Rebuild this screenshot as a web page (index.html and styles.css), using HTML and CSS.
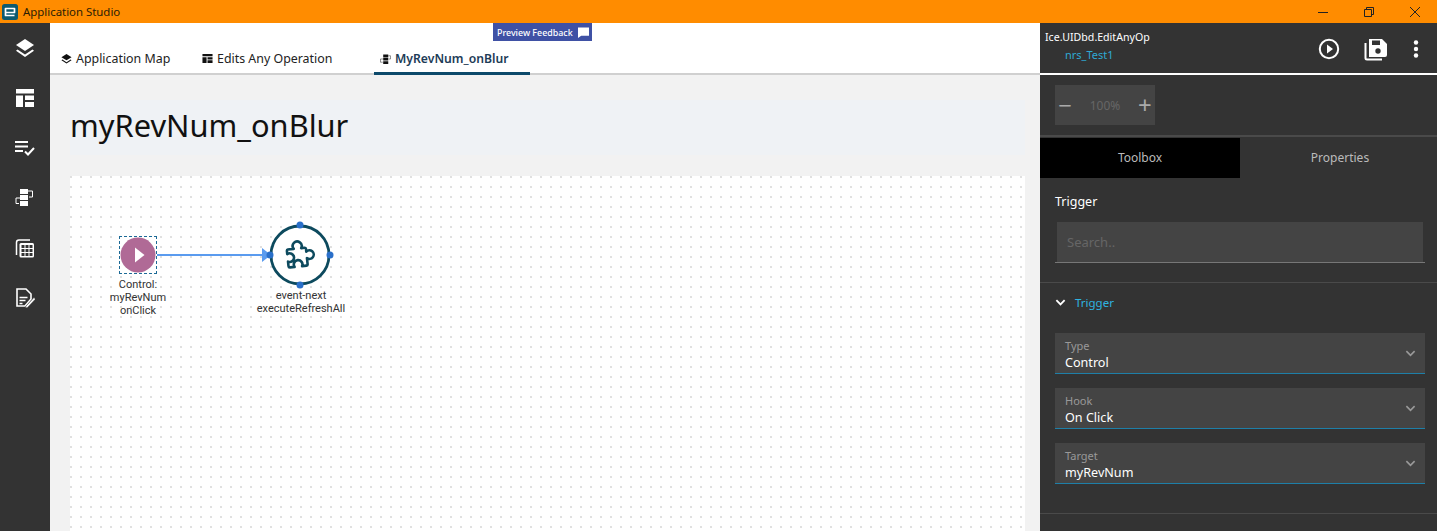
FILE: index.html
```html
<!DOCTYPE html>
<html lang="en">
<head>
<meta charset="utf-8">
<title>Application Studio</title>
<link rel="stylesheet" href="styles.css">
</head>
<body>
<header class="titlebar">
  <div class="logo"><svg viewBox="0 0 16 16" width="16" height="16"><rect width="16" height="16" rx="2.500" fill="#0d5a70"/><path d="M3.500 8.500h9v-4h-9v7h9" fill="none" stroke="#fff" stroke-width="1.700" stroke-linejoin="round"/></svg></div>
  <span class="app-name">Application Studio</span>
  <div class="win-controls">
    <svg viewBox="0 0 12 12" width="12" height="12"><path d="M1 6.500h10" stroke="#222" fill="none"/></svg>
    <svg viewBox="0 0 12 12" width="12" height="12"><path d="M1.500 3.500h7v7h-7zM3.500 3.500v-2h7v7h-2" stroke="#222" fill="none"/></svg>
    <svg viewBox="0 0 12 12" width="12" height="12"><path d="M1 1l10 10M11 1L1 11" stroke="#222" fill="none"/></svg>
  </div>
</header>
<div class="app">
  <nav class="sidebar">
    <svg class="side-icon" viewBox="0 0 20 20"><path d="M10 1l9 6-9 6-9-6z" fill="#fff"/><path d="M2.500 11.500L10 16.500l7.500-5 1.500 1.200-9 6.300-9-6.300z" fill="#fff"/></svg>
    <svg class="side-icon" viewBox="0 0 20 20"><path d="M1 1h18v4.500H1zM1 7.500h7V19H1zM10 7.500h9V12h-9zM10 14h9v5h-9z" fill="#fff"/></svg>
    <svg class="side-icon" viewBox="0 0 20 20"><path d="M0 3h13v2H0zM0 7.500h13v2H0zM0 12h8v2H0z" fill="#fff"/><path d="M10 13.500l3 3 6-6.500" fill="none" stroke="#fff" stroke-width="2"/></svg>
    <svg class="side-icon" viewBox="0 0 20 20"><path d="M5 1h8v5H5zM5 7h8v5H5zM5 13h8v5H5z" fill="#fff"/><path d="M13 3h4.500v6H14M5 10H1v5.500h3" fill="none" stroke="#fff"/></svg>
    <svg class="side-icon" viewBox="0 0 20 20"><path d="M1.500 17V4.500Q1.500 2 4 2h11" fill="none" stroke="#fff" stroke-width="1.500"/><rect x="4.500" y="5" width="14.500" height="14.500" rx="1.500" fill="#fff"/><path d="M6.500 7h3v3h-3zM10.500 7h3v3h-3zM14.500 7h3v3h-3zM6.500 11h3v3h-3zM10.500 11h3v3h-3zM14.500 11h3v3h-3zM6.500 15h3v3h-3zM10.500 15h3v3h-3zM14.500 15h3v3h-3z" fill="#333"/></svg>
    <svg class="side-icon" viewBox="0 0 20 20"><path d="M2 1h9l5 5v5l-6 7H2z" fill="none" stroke="#fff" stroke-width="1.600"/><path d="M4.500 9.500h8M4.500 12.500h6M4.500 15.500h3" stroke="#fff" stroke-width="1.500"/><path d="M11 18l8-8.500 1.500 1.500-8 8.500-2 .5z" fill="#fff" stroke="#333" stroke-width=".5"/></svg>
  </nav>

  <main class="main">
    <div class="tabs">
      <a class="tab tab-map">
        <svg viewBox="0 0 12 12" width="11" height="11"><path d="M6 1l5.500 3.500L6 8 .5 4.500z" fill="#111"/><path d="M1.500 7L6 10l4.500-3 1 .8L6 11.500.5 7.800z" fill="#111"/></svg>
        Application Map
      </a>
      <a class="tab tab-edits">
        <svg viewBox="0 0 12 12" width="11" height="11"><path d="M.5 1h11v2.500H.5zM.5 4.500H5V11H.5zM6 4.500h5.500V7H6zM6 8h5.500v3H6z" fill="#111"/></svg>
        Edits Any Operation
      </a>
      <a class="tab tab-active">
        <svg viewBox="0 0 12 12" width="11" height="12"><path d="M3.500 1h5.500v3H3.500zM3.500 4.700h5.500v3H3.500zM3.500 8.400h5.500v3H3.500z" fill="#111"/><path d="M9 2.500h2.500v3.500H9.500M3.500 6H.5v3.500h2.500" fill="none" stroke="#555" stroke-width=".7"/></svg>
        MyRevNum_onBlur
      </a>
    </div>
    <div class="feedback">Preview Feedback
      <svg viewBox="0 0 12 12" width="11" height="11"><path d="M0 .5h12v9H3.500L0 12z" fill="#fff"/></svg>
    </div>
    <div class="content">
      <h1 class="page-title">myRevNum_onBlur</h1>
      <section class="canvas">
        <svg class="edges" width="230" height="140" viewBox="0 0 230 140">
          <path d="M87 79h106" stroke="#5a9bef" stroke-width="2" fill="none"/>
          <path d="M192 72l9 7-9 7z" fill="#5a9bef"/>
        </svg>
        <div class="trigger-node">
          <svg viewBox="0 0 36 36" width="36" height="36">
            <circle cx="18" cy="18" r="17.500" fill="#b06a96"/>
            <path d="M15 10.500l9.500 7.500-9.500 7.500z" fill="#fff"/>
          </svg>
        </div>
        <div class="node-label label-trigger">Control:<br>myRevNum<br>onClick</div>
        <div class="event-node">
          <svg viewBox="0 0 64 64" width="64" height="64">
            <circle cx="32" cy="32" r="29" fill="#fff" stroke="#0d4a5e" stroke-width="2.800"/>
            <path transform="rotate(-6 30 33)" d="M20.500 25.500H26.500A4.500 4.500 0 1 1 34 25.500H37.500Q38.700 25.500 38.700 27V29.500A4.300 4.300 0 1 1 38.700 36V42Q38.700 43.500 37.500 43.500H33A4.300 4.300 0 1 0 25.500 43.500H21Q19.500 43.500 19.500 42V37.500A4.300 4.300 0 1 0 19.500 30V27Q19.500 25.500 20.500 25.500Z" fill="none" stroke="#0d4a5e" stroke-width="2.600" stroke-linejoin="round"/>
            <circle cx="32" cy="2" r="3.500" fill="#2a6fc9"/>
            <circle cx="2" cy="32" r="3.500" fill="#2a6fc9"/>
            <circle cx="62" cy="32" r="3.500" fill="#2a6fc9"/>
            <circle cx="32" cy="62" r="3.500" fill="#2a6fc9"/>
          </svg>
        </div>
        <div class="node-label label-event">event-next<br>executeRefreshAll</div>
      </section>
    </div>
  </main>

  <aside class="panel">
    <div class="panel-head">
      <div class="head-text">
        <div class="head-title">Ice.UIDbd.EditAnyOp</div>
        <div class="head-sub">nrs_Test1</div>
      </div>
      <div class="head-actions">
        <svg viewBox="0 0 22 22" width="22" height="22"><circle cx="11" cy="11" r="9.200" fill="none" stroke="#fff" stroke-width="2"/><path d="M9 6.500l6 4.500-6 4.500z" fill="#fff"/></svg>
        <svg viewBox="0 0 24 24" width="24" height="24"><path d="M5 2h13l5 5v11a2 2 0 0 1-2 2H5z" fill="#fff"/><path d="M8 3.500h8V8H8z" fill="#333"/><circle cx="14" cy="14" r="2.700" fill="#333"/><path d="M1.500 6v15q0 1.500 1.500 1.500h15" fill="none" stroke="#fff" stroke-width="2"/></svg>
        <svg class="dots" viewBox="0 0 6 18" width="6" height="18"><circle cx="3" cy="2.500" r="2.200" fill="#fff"/><circle cx="3" cy="9" r="2.200" fill="#fff"/><circle cx="3" cy="15.500" r="2.200" fill="#fff"/></svg>
      </div>
    </div>
    <div class="zoom-row">
      <div class="zoom-box">
        <span class="zoom-btn">−</span>
        <span class="zoom-val">100%</span>
        <span class="zoom-btn">+</span>
      </div>
    </div>
    <div class="panel-tabs">
      <div class="panel-tab panel-tab-on">Toolbox</div>
      <div class="panel-tab">Properties</div>
    </div>
    <div class="search-sec">
      <div class="search-title">Trigger</div>
      <div class="search-box">Search..</div>
    </div>
    <div class="acc">
      <div class="acc-head">
        <svg viewBox="0 0 12 12" width="11" height="11"><path d="M1.500 3.500L6 8l4.500-4.500" fill="none" stroke="#fff" stroke-width="2"/></svg>
        <span>Trigger</span>
      </div>
      <div class="field">
        <div class="field-text"><div class="field-label">Type</div><div class="field-value">Control</div></div>
        <svg viewBox="0 0 12 12" width="11" height="11"><path d="M1.500 3.500L6 8l4.500-4.500" fill="none" stroke="#999" stroke-width="1.800"/></svg>
      </div>
      <div class="field">
        <div class="field-text"><div class="field-label">Hook</div><div class="field-value">On Click</div></div>
        <svg viewBox="0 0 12 12" width="11" height="11"><path d="M1.500 3.500L6 8l4.500-4.500" fill="none" stroke="#999" stroke-width="1.800"/></svg>
      </div>
      <div class="field">
        <div class="field-text"><div class="field-label">Target</div><div class="field-value">myRevNum</div></div>
        <svg viewBox="0 0 12 12" width="11" height="11"><path d="M1.500 3.500L6 8l4.500-4.500" fill="none" stroke="#999" stroke-width="1.800"/></svg>
      </div>
    </div>
  </aside>
</div>
</body>
</html>
```
FILE: styles.css
```css
* { box-sizing: border-box; }
html, body { margin: 0; height: 531px; overflow: hidden; }
body { font-family: "Noto Sans", "Open Sans", sans-serif; background: #fff; color: #222; }

.titlebar { height: 23px; background: #ff8c00; display: flex; align-items: center; padding-left: 2px; font-size: 11.400px; }
.logo { width: 16px; height: 16px; display: flex; }
.app-name { margin-left: 5px; color: #2b1c05; }
.win-controls { margin-left: auto; display: flex; gap: 34px; padding-right: 16px; }

.app { display: flex; height: 508px; }

.sidebar { width: 50px; flex: none; background: #333; display: flex; flex-direction: column; align-items: center; padding-top: 15px; gap: 30px; padding-right: 1px; }
.side-icon { width: 20px; height: 20px; flex: none; }

.main { width: 990px; flex: none; position: relative; background: #f2f2f2; }
.tabs { height: 52px; background: #fff; border-bottom: 2px solid #d0d0d0; display: flex; align-items: flex-end; position: relative; }
.tab { height: 30px; font-size: 12.400px; color: #222; display: flex; align-items: center; gap: 4px; }
.tab svg { flex: none; }
.tab-map { margin-left: 11px; width: 141px; }
.tab-edits { width: 172px; }
.tab-active { width: 156px; padding-left: 6px; font-size: 12.200px; font-weight: 600; color: #1d3c57; border-bottom: 3px solid #0d4a6b; margin-bottom: -2px; }
.feedback { position: absolute; left: 443px; top: 0; width: 99px; height: 18px; background: #3f51a5; color: #fff; font-size: 8.900px; font-weight: 500; display: flex; align-items: center; justify-content: space-between; padding: 0 3px 0 4px; white-space: nowrap; }

.content { padding: 25px 15px 0 20px; }
.page-title { margin: 0; height: 55px; background: #eff2f5; font-size: 30.800px; font-weight: 400; line-height: 50px; color: #111; }
.canvas { margin-top: 21px; height: 360px; position: relative; background-color: #fff; background-image: radial-gradient(circle at 1px 1px, #e0e0e0 .7px, transparent 1px); background-size: 10px 10px; }
.edges { position: absolute; left: 0; top: 0; }
.trigger-node { position: absolute; left: 49px; top: 60px; width: 38px; height: 38px; border: 1px dashed #1c6a96; background: #fff; }
.event-node { position: absolute; left: 198px; top: 47px; width: 64px; height: 64px; }
.event-node svg { display: block; overflow: visible; }
.trigger-node svg { display: block; }
.node-label { position: absolute; text-align: center; font-family: Roboto, sans-serif; font-size: 11px; line-height: 13px; color: #333; white-space: nowrap; transform: translateX(-50%); }
.label-trigger { left: 68px; top: 102px; }
.label-event { left: 231px; top: 113px; }

.panel { width: 397px; flex: none; background: #333; color: #fff; }
.panel-head { height: 52px; border-bottom: 2px solid #fff; display: flex; justify-content: space-between; padding-left: 5px; }
.head-text { padding-top: 5px; font-size: 10.600px; line-height: 18px; }
.head-sub { color: #2fa9d3; padding-left: 20px; font-size: 11px; }
.head-actions { display: flex; align-items: center; gap: 24px; padding-right: 18px; padding-top: 1px; }
.dots { margin-left: 1px; }
.zoom-row { height: 62px; padding: 10px 0 0 15px; border-bottom: 2px solid #4a4a4a; }
.zoom-box { width: 100px; height: 40px; background: #444; display: flex; align-items: center; justify-content: space-between; color: #aaa; }
.zoom-btn { font-size: 24px; width: 20px; text-align: center; line-height: 1; }
.zoom-val { font-size: 12px; color: #666; }
.panel-tabs { display: flex; height: 40px; margin-top: 1px; font-size: 12px; color: #bbb; }
.panel-tab { width: 200px; flex: none; display: flex; align-items: center; justify-content: center; padding-bottom: 2px; }
.panel-tab-on { background: #000; }
.search-sec { height: 105px; padding: 15px 12px 0 15px; border-bottom: 1px solid #4a4a4a; }
.search-title { font-size: 12.500px; line-height: 18px; }
.search-box { margin-top: 11px; height: 41px; border-bottom: 1px solid #777; background: linear-gradient(#444, #444) no-repeat 2px 0 / calc(100% - 4px) 100%; color: #666; font-size: 13px; line-height: 40px; padding-left: 12px; }
.acc { height: 231px; border-bottom: 1px solid #4a4a4a; padding: 0 12px 0 15px; }
.acc-head { height: 50px; display: flex; align-items: center; gap: 9px; padding: 0 0 11px 0; font-size: 11.500px; color: #2fb4e0; }
.field { height: 41px; background: #444; border-bottom: 1px solid #1e7fa8; margin-bottom: 14px; display: flex; align-items: center; justify-content: space-between; padding: 0 9px 0 10px; }
.field-text { height: 40px; }
.field-label { font-size: 11px; line-height: 14px; color: #999; padding-top: 6px; height: 20px; }
.field-value { font-size: 12.600px; line-height: 20px; color: #fff; }
```
